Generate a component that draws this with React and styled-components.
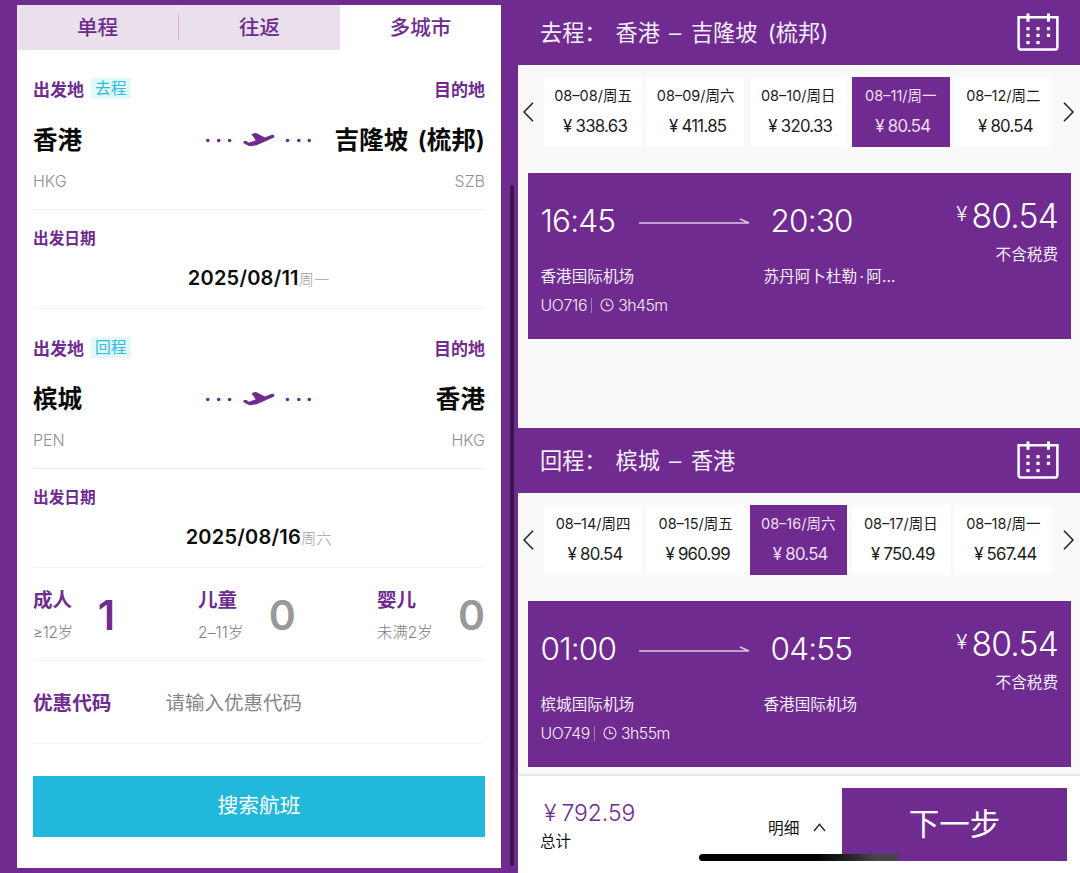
import React from 'react';
import styled, { createGlobalStyle } from 'styled-components';

const purple = '#6f2b8f';

const Global = createGlobalStyle`
  * { box-sizing: border-box; }
  body {
    margin: 0;
    background: ${purple};
    font-family: Inter, "Noto Sans CJK SC", sans-serif;
    color: #111;
  }
`;

const Page = styled.div`
  display: flex;
  width: 1080px;
  height: 873px;
  overflow: hidden;
  background: ${purple};
  white-space: nowrap;
`;

/* ---------- search form ---------- */

const SearchPanel = styled.section`
  width: 484px;
  height: 863px;
  margin: 5px 0 0 17px;
  background: #fff;
`;

const Tabs = styled.nav`
  display: flex;
  height: 45px;
`;

const Tab = styled.div`
  flex: 1;
  display: flex;
  align-items: center;
  justify-content: center;
  padding-bottom: 4px;
  font-size: 20.5px;
  font-weight: 500;
  color: ${purple};
  background: ${p => (p.$active ? '#fff' : '#e9e0ec')};
`;

const TabDivider = styled.span`
  width: 1px;
  height: 45px;
  padding: 9px 0 10px;
  background: linear-gradient(#d3b3e0, #d3b3e0) content-box, #e9e0f2;
`;

const Form = styled.div`
  padding: 0 16px;
`;

const RouteBlock = styled.div`
  height: ${p => p.$h}px;
  border-bottom: 1px solid #eeeeee;
`;

const Between = styled.div`
  display: flex;
  align-items: center;
  justify-content: space-between;
  height: ${p => p.$h}px;
  padding-top: ${p => p.$top || 0}px;
`;

const Label = styled.span`
  font-size: ${p => p.$size || 17}px;
  font-weight: 600;
  color: ${purple};
`;

const LabelGroup = styled.div`
  display: flex;
  align-items: center;
  gap: 7px;
`;

const Tag = styled.span`
  height: 21px;
  padding: 0 4px;
  line-height: 22px;
  font-size: 15.8px;
  color: #2bbddc;
  background: #e4f7fb;
`;

const City = styled.span`
  font-size: 24.6px;
  font-weight: 600;
  word-spacing: 3px;
  color: #0a0a0a;
`;

const CityRow = styled.div`
  display: grid;
  grid-template-columns: 172px 108px 1fr;
  align-items: center;
  height: 46px;

  ${City} { padding-bottom: 4px; }
  ${City}:last-child { text-align: right; }
`;

const Code = styled.span`
  font-size: 16px;
  font-weight: 300;
  color: #8f8f8f;
`;

const DateBlock = styled.div`
  height: ${p => p.$h}px;
  padding-top: 16px;
  border-bottom: 1px solid #f3f3f3;
`;

const DateLabel = styled.div`
  height: 26px;
  line-height: 26px;
  font-size: 15.7px;
  font-weight: 600;
  color: ${purple};
`;

const DateValue = styled.div`
  display: flex;
  justify-content: center;
  align-items: baseline;
  height: 30px;
  margin-top: 11px;
  padding-right: 1px;
  line-height: 31px;
  font-size: 20px;
  font-weight: 600;
  letter-spacing: 0.22px;
  color: #0d0d0d;
`;

const Weekday = styled.span`
  font-size: 15.2px;
  font-weight: 300;
  letter-spacing: 0;
  color: #a0a0a0;
`;

const Passengers = styled.div`
  display: grid;
  grid-template-columns: 165px 179px 108px;
  height: 93px;
  border-bottom: 1px solid #f3f3f3;
`;

const Passenger = styled.div`
  display: flex;
  justify-content: ${p => (p.$spread ? 'space-between' : 'flex-start')};
  gap: ${p => p.$gap || 0}px;
`;

const PassengerName = styled.div`
  height: 34px;
  margin-top: 14px;
  line-height: 36px;
  font-size: 19.5px;
  font-weight: 600;
  color: ${purple};
`;

const PassengerAge = styled.div`
  height: 30px;
  line-height: 34px;
  font-size: 15.4px;
  font-weight: 300;
  letter-spacing: ${p => p.$tracking || 0}px;
  color: #808080;
`;

const Count = styled.span`
  line-height: 94px;
  font-size: 41px;
  font-weight: 600;
  color: ${p => (p.$on ? purple : '#999')};
`;

const Promo = styled.div`
  display: flex;
  align-items: center;
  gap: 54px;
  height: 83px;
  padding-bottom: 2px;
  border-bottom: 1px solid #f5f5f5;
`;

const Placeholder = styled.span`
  font-size: 19.5px;
  color: #858585;
`;

const SearchButton = styled.div`
  display: flex;
  align-items: center;
  justify-content: center;
  height: 61px;
  margin-top: 32px;
  padding-bottom: 5px;
  font-size: 20.8px;
  color: #fff;
  background: #22b8db;
`;

/* ---------- gutter with scroll thumb ---------- */

const Gutter = styled.div`
  width: 17px;
  padding: 185px 4px 0 9px;
`;

const Thumb = styled.div`
  height: 681px;
  border-radius: 2px;
  background: #3a164e;
`;

/* ---------- flight results ---------- */

const Results = styled.main`
  position: relative;
  display: flex;
  flex-direction: column;
  width: 562px;
  background: #f9f9f9;
`;

const Leg = styled.section`
  height: ${p => p.$h}px;
`;

const LegHeader = styled.header`
  display: flex;
  align-items: center;
  justify-content: space-between;
  height: ${p => p.$h}px;
  padding: 0 21px 1px 22px;
  font-size: 22.2px;
  font-weight: 400;
  color: #f6effa;
  background: ${purple};
`;

const LegTitle = styled.div`
  display: flex;
  gap: 9px;
  height: 32px;
  line-height: 33px;
  word-spacing: 4px;
`;

const Dash = styled.span`
  width: 13px;
  font-family: "Liberation Sans", sans-serif;
`;

const Strip = styled.div`
  display: flex;
  align-items: center;
  gap: 5.2px;
  height: 70px;
  margin-top: 12.5px;
  padding: 0 4px 0 5px;
`;

const Arrow = styled.span`
  display: flex;
  width: ${p => (p.$right ? 17.2 : 16.2)}px;
  justify-content: ${p => (p.$right ? 'flex-end' : 'flex-start')};
`;

const Day = styled.div`
  width: 97.4px;
  height: 70px;
  padding-top: 5px;
  text-align: center;
  color: ${p => (p.$active ? '#efdff6' : '#1c1c1c')};
  background: ${p => (p.$active ? purple : '#fff')};
`;

const DayDate = styled.div`
  height: 28px;
  line-height: 27px;
  font-size: 14.5px;
`;

const DayPrice = styled.div`
  display: flex;
  justify-content: center;
  gap: 4px;
  height: 32px;
  padding-left: 4px;
  line-height: 32px;
  font-size: 16.8px;
  letter-spacing: -0.75px;
`;

const Card = styled.article`
  display: grid;
  grid-template-columns: 223px 1fr 110px;
  width: 543px;
  height: 166px;
  margin: 26px 0 0 9.5px;
  padding: 0 12.5px 0 13px;
  color: #f5eef9;
  background: ${purple};
`;

const TimeRow = styled.div`
  display: flex;
  align-items: center;
  height: 44px;
  margin-top: 25px;
  padding-left: ${p => p.$indent || 0}px;
  font-size: 31.5px;
  font-weight: 350;
  letter-spacing: -0.8px;
  color: #fff;
`;

const DepartTime = styled.span`
  width: 98px;
`;

const Airport = styled.div`
  height: 28px;
  margin-top: 21px;
  line-height: 28px;
  font-size: 15.6px;
`;

const NameDot = styled.span`
  margin: 0 2.4px;
`;

const FlightMeta = styled.div`
  display: flex;
  align-items: center;
  height: 28px;
  font-size: 15.8px;
  font-weight: 350;
  letter-spacing: -0.3px;
`;

const MetaRule = styled.i`
  width: 1px;
  height: 15px;
  margin: 0 8px 0 4px;
  background: #a57cb9;
`;

const Duration = styled.span`
  margin-left: 4px;
  letter-spacing: -0.5px;
`;

const Fare = styled.div`
  display: flex;
  justify-content: flex-end;
  gap: 5px;
  height: 44px;
  margin-top: 21px;
  line-height: 43px;
  font-size: 33.6px;
  font-weight: 350;
  letter-spacing: -0.8px;
  color: #fff;
`;

const FareSign = styled.span`
  font-size: 20.5px;
  line-height: 40px;
`;

const TaxNote = styled.div`
  height: 30px;
  margin-top: 2px;
  line-height: 30px;
  text-align: right;
  font-size: 15.6px;
`;

const Footer = styled.footer`
  display: flex;
  align-items: flex-start;
  height: 99px;
  border-top: 2px solid #e6e6e6;
  background: #fff;
`;

const Total = styled.div`
  width: 250px;
  padding: 20px 0 0 22px;
  font-size: 15.5px;
`;

const TotalPrice = styled.div`
  display: flex;
  gap: 5px;
  height: 34px;
  padding-left: 4px;
  line-height: 34px;
  font-size: 22.9px;
  font-weight: 350;
  color: ${purple};
`;

const TotalLabel = styled.div`
  height: 24px;
  line-height: 23px;
`;

const Details = styled.div`
  display: flex;
  align-items: center;
  gap: 14px;
  width: 74px;
  height: 28px;
  margin-top: 37px;
  font-size: 15.7px;
`;

const NextButton = styled.div`
  display: flex;
  align-items: center;
  justify-content: center;
  width: 225px;
  height: 73px;
  margin-top: 12px;
  padding-bottom: 5px;
  font-size: 30.5px;
  color: #fff;
  background: ${purple};
`;

const HomeBar = styled.div`
  position: absolute;
  left: 181px;
  bottom: 12px;
  width: 200px;
  height: 7px;
  border-radius: 4px;
  background: linear-gradient(90deg, #000 58%, #1d1d1d 72%, #464646 88%);
`;

const PlanePath = () => (
  <svg width="108" height="20" viewBox="0 0 108 20" fill={purple}>
    {[2.8, 13.7, 24.6, 82.5, 93.8, 104.3].map(x => (
      <circle key={x} cx={x} cy="10.5" r="1.8" />
    ))}
    <path d="M38 12 Q38.8 10.6 41.5 11 L43.6 12.8 L50.6 10.4 Q48.8 6.8 46.4 4.8 Q48.5 2.6 51 3 L60 7.4 L66.2 4.9 Q69.3 4 69.5 6.2 Q69.2 7.8 66.8 8.6 L54.5 14 Q49 16.6 44 16.1 Q43 15.9 42.6 15.2 Q39.2 14.6 38 12Z" />
  </svg>
);

const CalendarIcon = () => (
  <svg width="42" height="38" viewBox="0 0 42 38" fill="none" stroke="#fff">
    <path d="M1.6 4.2 H40.4 V34 Q40.4 36.4 38.2 36.4 H3.8 Q1.6 36.4 1.6 34 Z" strokeWidth="2.5" />
    <path d="M11 0.5 V8.7 M31.5 0.5 V8.7" strokeWidth="3" />
    {[[11, 15.7], [21, 15.7], [31.5, 15.7], [11, 22.4], [21, 22.4], [31.5, 22.4], [11, 29.6], [21, 29.6]].map(([x, y]) => (
      <rect key={`${x}-${y}`} x={x - 1.6} y={y - 1.6} width="3.2" height="3.2" fill="#fff" stroke="none" />
    ))}
  </svg>
);

const Chevron = ({ right }) => (
  <svg width="11" height="22" viewBox="0 0 11 22" fill="none" stroke="#222" strokeWidth="1.6">
    <path d={right ? 'M1 1.8 L10 11 L1 20.2' : 'M10 1.8 L1 11 L10 20.2'} />
  </svg>
);

const FlightArrow = () => (
  <svg width="112" height="10" viewBox="0 0 112 10" fill="none" stroke="#d9c6e3" strokeWidth="1.6">
    <path d="M0 8 H110 L101 4" />
  </svg>
);

const ClockIcon = () => (
  <svg width="14" height="14" viewBox="0 0 14 14" fill="none" stroke="#e3d3eb" strokeWidth="1.2">
    <circle cx="7" cy="7" r="6" />
    <path d="M6.6 3.4 V7.4 H10" />
  </svg>
);

const CaretUp = () => (
  <svg width="13" height="9" viewBox="0 0 13 9" fill="none" stroke="#222" strokeWidth="1.4">
    <path d="M1 8 L6.5 1.3 L12 8" />
  </svg>
);

const Route = ({ tag, from, fromCode, to, toCode, h }) => (
  <RouteBlock $h={h}>
    <Between $h={53} $top={23}>
      <LabelGroup>
        <Label>出发地</Label>
        <Tag>{tag}</Tag>
      </LabelGroup>
      <Label>目的地</Label>
    </Between>
    <Between $h={14} />
    <CityRow>
      <City>{from}</City>
      <PlanePath />
      <City>{to}</City>
    </CityRow>
    <Between $h={36}>
      <Code>{fromCode}</Code>
      <Code>{toCode}</Code>
    </Between>
  </RouteBlock>
);

const DateField = ({ value, day, h }) => (
  <DateBlock $h={h}>
    <DateLabel>出发日期</DateLabel>
    <DateValue>
      {value}
      <Weekday>{day}</Weekday>
    </DateValue>
  </DateBlock>
);

const DayStrip = ({ days, active }) => (
  <Strip>
    <Arrow><Chevron /></Arrow>
    {days.map(([date, price], i) => (
      <Day key={date} $active={i === active}>
        <DayDate>{date}</DayDate>
        <DayPrice><span>¥</span><span>{price}</span></DayPrice>
      </Day>
    ))}
    <Arrow $right><Chevron right /></Arrow>
  </Strip>
);

const FlightCard = ({ depart, arrive, from, to, no, duration }) => (
  <Card>
    <div>
      <TimeRow>
        <DepartTime>{depart}</DepartTime>
        <FlightArrow />
      </TimeRow>
      <Airport>{from}</Airport>
      <FlightMeta>
        {no}
        <MetaRule />
        <ClockIcon />
        <Duration>{duration}</Duration>
      </FlightMeta>
    </div>
    <div>
      <TimeRow $indent={7}>{arrive}</TimeRow>
      <Airport>{to}</Airport>
    </div>
    <div>
      <Fare><FareSign>¥</FareSign>80.54</Fare>
      <TaxNote>不含税费</TaxNote>
    </div>
  </Card>
);

const outbound = [
  ['08–08/周五', '338.63'],
  ['08–09/周六', '411.85'],
  ['08–10/周日', '320.33'],
  ['08–11/周一', '80.54'],
  ['08–12/周二', '80.54'],
];

const inbound = [
  ['08–14/周四', '80.54'],
  ['08–15/周五', '960.99'],
  ['08–16/周六', '80.54'],
  ['08–17/周日', '750.49'],
  ['08–18/周一', '567.44'],
];

export default function App() {
  return (
    <Page>
      <Global />
      <SearchPanel>
        <Tabs>
          <Tab>单程</Tab>
          <TabDivider />
          <Tab>往返</Tab>
          <Tab $active>多城市</Tab>
        </Tabs>
        <Form>
          <Route h={160} tag="去程" from="香港" fromCode="HKG" to="吉隆坡 (梳邦)" toCode="SZB" />
          <DateField h={99} value="2025/08/11" day="周一" />
          <Route h={160} tag="回程" from="槟城" fromCode="PEN" to="香港" toCode="HKG" />
          <DateField h={99} value="2025/08/16" day="周六" />
          <Passengers>
            <Passenger $gap={25}>
              <div>
                <PassengerName>成人</PassengerName>
                <PassengerAge $tracking={-0.3}>≥12岁</PassengerAge>
              </div>
              <Count $on>1</Count>
            </Passenger>
            <Passenger $gap={25}>
              <div>
                <PassengerName>儿童</PassengerName>
                <PassengerAge $tracking={0.2}>2–11岁</PassengerAge>
              </div>
              <Count>0</Count>
            </Passenger>
            <Passenger $spread>
              <div>
                <PassengerName>婴儿</PassengerName>
                <PassengerAge>未满2岁</PassengerAge>
              </div>
              <Count>0</Count>
            </Passenger>
          </Passengers>
          <Promo>
            <Label $size={19.6}>优惠代码</Label>
            <Placeholder>请输入优惠代码</Placeholder>
          </Promo>
          <SearchButton>搜索航班</SearchButton>
        </Form>
      </SearchPanel>

      <Gutter>
        <Thumb />
      </Gutter>

      <Results>
        <Leg $h={427.5}>
          <LegHeader $h={64.5}>
            <LegTitle><span>去程：</span><span>香港</span><Dash>–</Dash><span>吉隆坡 (梳邦)</span></LegTitle>
            <CalendarIcon />
          </LegHeader>
          <DayStrip days={outbound} active={3} />
          <FlightCard
            depart="16:45"
            arrive="20:30"
            from="香港国际机场"
            to={<>苏丹阿卜杜勒<NameDot>·</NameDot>阿…</>}
            no="UO716"
            duration="3h45m"
          />
        </Leg>
        <Leg $h={346.5}>
          <LegHeader $h={65}>
            <LegTitle><span>回程：</span><span>槟城</span><Dash>–</Dash><span>香港</span></LegTitle>
            <CalendarIcon />
          </LegHeader>
          <DayStrip days={inbound} active={2} />
          <FlightCard depart="01:00" arrive="04:55" from="槟城国际机场" to="香港国际机场" no="UO749" duration="3h55m" />
        </Leg>
        <Footer>
          <Total>
            <TotalPrice><span>¥</span>792.59</TotalPrice>
            <TotalLabel>总计</TotalLabel>
          </Total>
          <Details>明细<CaretUp /></Details>
          <NextButton>下一步</NextButton>
        </Footer>
        <HomeBar />
      </Results>
    </Page>
  );
}
